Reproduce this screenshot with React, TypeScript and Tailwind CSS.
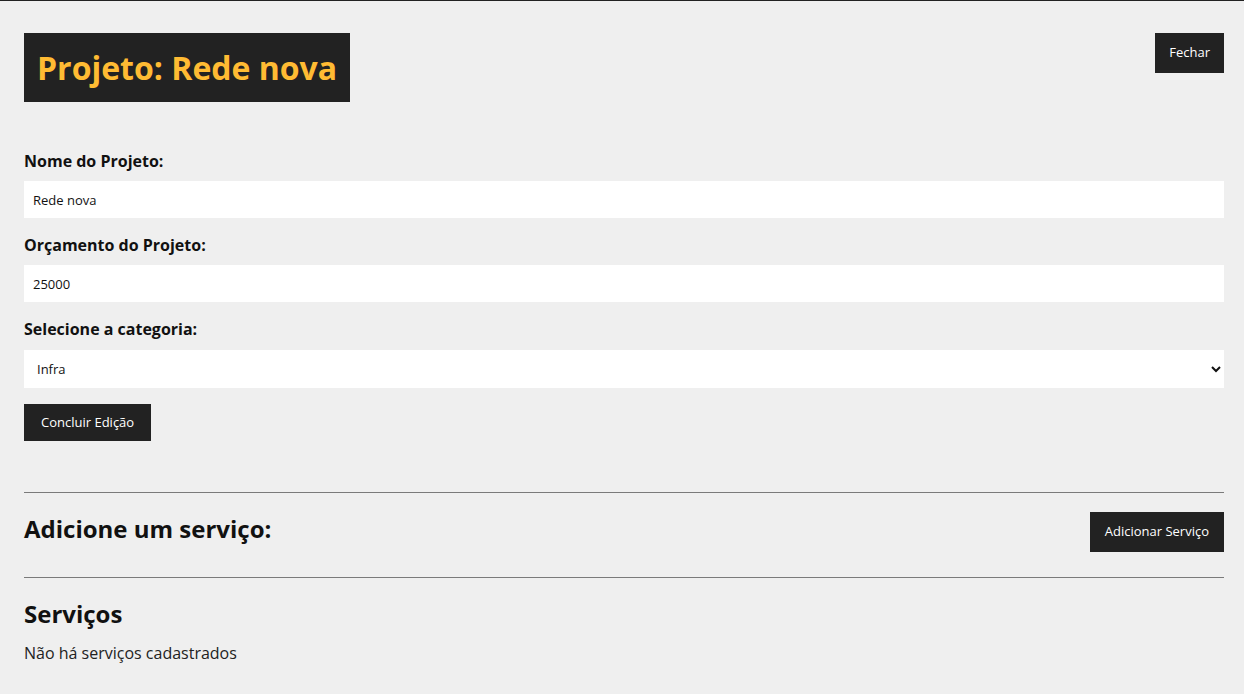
import React from "react";

export default function App() {
  return (
    <div
      className="h-[694px] overflow-hidden bg-[#efefef] border-t border-[#222] text-[#111]"
      style={{ fontFamily: '"Open Sans", "Noto Sans", sans-serif' }}
    >
      <div className="pl-[24px] pr-[20px] pt-[32px]">
        <div className="flex justify-between items-start">
          <h1 className="bg-[#222] text-[#ffbb33] text-[32px] font-bold leading-[49px] px-[13px] py-[10px]">
            Projeto: Rede nova
          </h1>
          <button className="bg-[#222] text-white text-[13px] h-[40px] px-[14px]">
            Fechar
          </button>
        </div>

        <form className="mt-[47px] flex flex-col">
          <label className="block text-[16px] font-bold leading-[24px] mb-[8px]">
            Nome do Projeto:
          </label>
          <input
            className="block w-full h-[37px] bg-white px-[9px] text-[13px] text-[#111] outline-none mb-[15px]"
            defaultValue="Rede nova"
          />
          <label className="block text-[16px] font-bold leading-[24px] mb-[8px]">
            Orçamento do Projeto:
          </label>
          <input
            className="block w-full h-[37px] bg-white px-[9px] text-[13px] text-[#111] outline-none mb-[15px]"
            defaultValue="25000"
          />
          <label className="block text-[16px] font-bold leading-[24px] mb-[9px]">
            Selecione a categoria:
          </label>
          <select
            className="block w-full h-[38px] bg-white px-[9px] text-[13px] text-[#111] outline-none mb-[16px]"
            defaultValue="Infra"
          >
            <option>Infra</option>
            <option>Desenvolvimento</option>
            <option>Design</option>
            <option>Planejamento</option>
          </select>
          <div>
            <button
              type="button"
              className="bg-[#222] text-white text-[13px] h-[37px] px-[17px]"
            >
              Concluir Edição
            </button>
          </div>
        </form>

        <div className="mt-[51px] border-t border-[#7a7a7a] pt-[19px] pb-[25px] flex justify-between items-start">
          <h2 className="text-[24px] font-bold leading-[36px] -mt-[1px]">
            Adicione um serviço:
          </h2>
          <button className="bg-[#222] text-white text-[13px] h-[40px] px-[15px]">
            Adicionar Serviço
          </button>
        </div>

        <div className="border-t border-[#7a7a7a] pt-[18px]">
          <h2 className="text-[24px] font-bold leading-[36px]">Serviços</h2>
          <p className="mt-[9px] text-[16px] leading-[24px] text-[#222]">
            Não há serviços cadastrados
          </p>
        </div>
      </div>
    </div>
  );
}
